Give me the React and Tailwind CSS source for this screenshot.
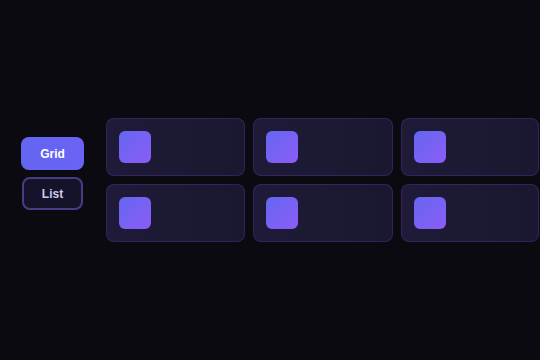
const cards = [1, 2, 3, 4, 5, 6];

export default function App() {
  return (
    <div
      className="w-[540px] h-[360px] bg-[#0b0a10] flex items-center overflow-hidden"
      style={{ fontFamily: "'Liberation Sans', Arial, sans-serif" }}
    >
      <div className="flex flex-col gap-[7px] ml-[21px] mb-[13px] shrink-0">
        <button className="w-[63px] h-[33px] rounded-lg bg-gradient-to-r from-[#6366f1] to-[#6b62f4] text-white text-[12px] font-bold">
          Grid
        </button>
        <button className="w-[61px] h-[33px] ml-[1px] rounded-lg bg-[#15132a] border-2 border-[#463c88] text-[#cdc8f2] text-[12px] font-bold">
          List
        </button>
      </div>
      <div className="grid grid-cols-[139px_140px_138px] gap-x-2 gap-y-2 ml-[22px] shrink-0">
        {cards.map((c) => (
          <div
            key={c}
            className="h-[58px] rounded-lg border border-[#8b5cf6]/20 bg-gradient-to-r from-[#1e1a38] to-[#1a1830] p-[12px]"
          >
            <div className="w-8 h-8 rounded-md bg-gradient-to-br from-[#6366f1] to-[#8b5cf6]" />
          </div>
        ))}
      </div>
    </div>
  );
}
